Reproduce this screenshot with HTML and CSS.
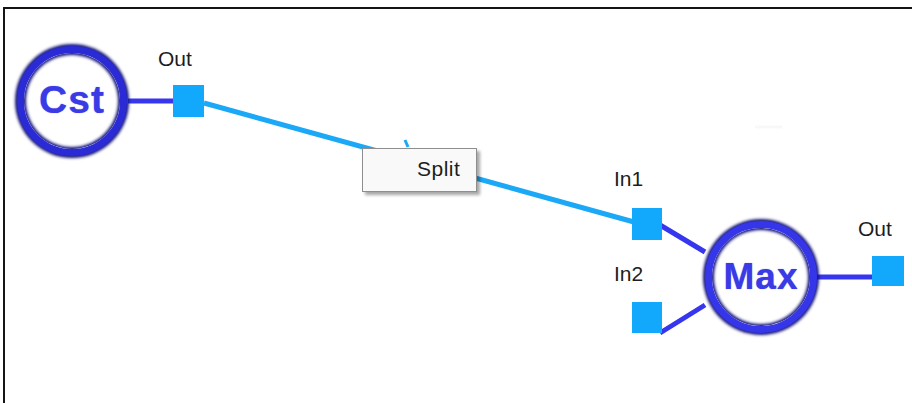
FILE: index.html
```html
<!DOCTYPE html>
<html lang="en">
<head>
  <meta charset="UTF-8">
  <title>Graph editor</title>
  <link rel="stylesheet" href="styles.css">
</head>
<body>
  <div class="canvas">
    <svg class="wires" width="910" height="400" viewBox="0 0 910 400">
      <line class="wire-link" x1="123" y1="92" x2="170" y2="92"/>
      <line class="wire-data" x1="199" y1="94" x2="629" y2="213"/>
      <line class="wire-link" x1="655" y1="216" x2="700" y2="243"/>
      <line class="wire-link" x1="655" y1="324" x2="700" y2="296"/>
      <line class="wire-link" x1="812" y1="268" x2="869" y2="268"/>
      <line class="wire-tick" x1="400" y1="131" x2="403" y2="138"/>
      <line class="ghost" x1="750" y1="118" x2="777" y2="118"/>
    </svg>

    <div class="node node-cst">Cst</div>
    <div class="node node-max">Max</div>

    <span class="port port-cst-out"></span>
    <span class="port port-in1"></span>
    <span class="port port-in2"></span>
    <span class="port port-max-out"></span>

    <span class="label label-cst-out">Out</span>
    <span class="label label-in1">In1</span>
    <span class="label label-in2">In2</span>
    <span class="label label-max-out">Out</span>

    <div class="menu">
      <span class="menu-item">Split</span>
    </div>
  </div>
</body>
</html>
```

FILE: styles.css
```css
html, body {
  margin: 0;
  padding: 0;
  background-color: #ffffff;
  overflow: hidden;
}
body {
  width: 912px;
  height: 403px;
}
.canvas {
  position: relative;
  margin: 7px 0 0 3px;
  width: 920px;
  height: 410px;
  border-top: 2px solid #151515;
  border-left: 2px solid #151515;
  font-family: "Liberation Sans", Arial, sans-serif;
}
.wires {
  position: absolute;
  left: 0;
  top: 0;
}
.wire-link {
  stroke: #3636ee;
  stroke-width: 5;
}
.wire-data {
  stroke: #1ba8f6;
  stroke-width: 5;
}
.wire-tick {
  stroke: #1ba8f6;
  stroke-width: 3;
}
.ghost {
  stroke: #f8f8f8;
  stroke-width: 3;
}

/* nodes */
.node {
  position: absolute;
  display: flex;
  align-items: center;
  justify-content: center;
  box-sizing: border-box;
  border-radius: 50%;
  border: 7px solid #3535ea;
  background-color: #ffffff;
  box-shadow: 0 0 3px 2px #16167a, inset 0 0 3px 2px #16167a;
  color: #3b3be6;
  font-weight: bold;
  font-size: 37px;
  letter-spacing: 1px;
  text-shadow: 0 0 1px #6a6af0;
}
.node-cst {
  left: 12px;
  top: 37px;
  width: 110px;
  height: 110px;
  border-color: #2a2ad6;
  font-size: 39px;
  padding-bottom: 2px;
}
.node-max {
  left: 700px;
  top: 212px;
  width: 112px;
  height: 112px;
}

/* ports */
.port {
  position: absolute;
  width: 31px;
  height: 31px;
  background-color: #12a9fc;
}
.port-cst-out {
  left: 168px;
  top: 76px;
  height: 32px;
}
.port-in1 {
  left: 627px;
  top: 199px;
  width: 30px;
  height: 32px;
}
.port-in2 {
  left: 627px;
  top: 293px;
  width: 30px;
}
.port-max-out {
  left: 867px;
  top: 247px;
  width: 32px;
  height: 30px;
}

/* labels */
.label {
  position: absolute;
  font-size: 21px;
  line-height: 22px;
  color: #1d1d1d;
}
.label-cst-out {
  left: 153px;
  top: 39px;
}
.label-in1 {
  left: 609px;
  top: 159px;
}
.label-in2 {
  left: 609px;
  top: 254px;
}
.label-max-out {
  left: 853px;
  top: 209px;
}

/* context menu */
.menu {
  position: absolute;
  left: 357px;
  top: 139px;
  width: 115px;
  height: 44px;
  box-sizing: border-box;
  display: flex;
  align-items: center;
  padding: 0 0 2px 54px;
  background-color: #f9f9f9;
  border: 1px solid #8e8e8e;
  box-shadow: 3px 3px 3px rgba(0, 0, 0, 0.35);
}
.menu-item {
  font-size: 21px;
  color: #1d1d1d;
  letter-spacing: 0.5px;
}
```
